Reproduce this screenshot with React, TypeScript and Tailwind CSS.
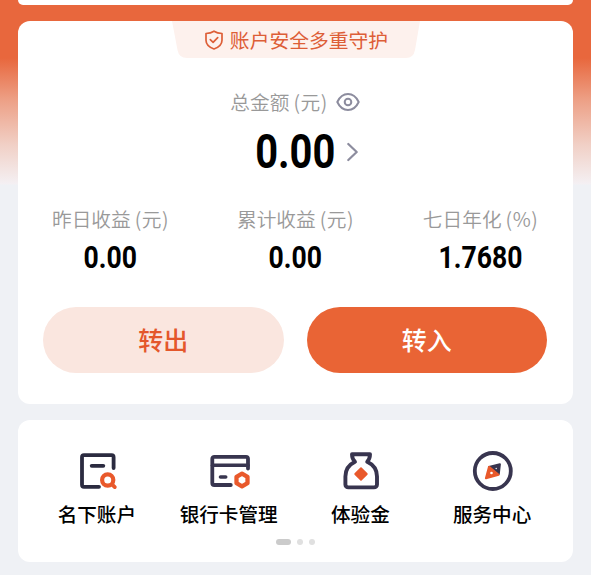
import type { ReactNode } from "react";

const stats = [
  { label: "昨日收益", unit: "元", value: "0.00" },
  { label: "累计收益", unit: "元", value: "0.00" },
  { label: "七日年化", unit: "%", value: "1.7680" },
];

function AccountIcon() {
  return (
    <svg className="size-10 overflow-visible" viewBox="0 0 40 40" fill="none" strokeLinecap="round" strokeLinejoin="round">
      <path d="M36.600 17V6.200a2 2 0 0 0-2-2H7a2 2 0 0 0-2 2v27.600a2 2 0 0 0 2 2h15" stroke="#2b2b40" strokeWidth="3.800" />
      <path d="M14.700 14.800H26.300" stroke="#2b2b40" strokeWidth="3.800" />
      <circle cx="30.700" cy="29" r="5.600" stroke="#e9592b" strokeWidth="4.200" />
      <path d="M35.500 33.800l2.300 2.300" stroke="#e9592b" strokeWidth="3.800" />
    </svg>
  );
}

function BankCardIcon() {
  return (
    <svg className="size-10 overflow-visible" viewBox="0 0 40 40" fill="none" strokeLinecap="round" strokeLinejoin="round">
      <path d="M39 17.500V7.800a2 2 0 0 0-2-2H5.300a2 2 0 0 0-2 2V32a2 2 0 0 0 2 2h16.500" stroke="#38354f" strokeWidth="3.800" />
      <path d="M3.500 14.300H39" stroke="#38354f" strokeWidth="3.400" />
      <path d="M11.500 26h5.200" stroke="#38354f" strokeWidth="3.600" />
      <path d="M33 22.700l5.500 3.150v6.300L33 35.300l-5.500-3.150v-6.300z" stroke="#e9592b" strokeWidth="4.300" />
    </svg>
  );
}

function MoneyBagIcon() {
  return (
    <svg className="size-10 overflow-visible" viewBox="0 0 40 40" fill="none" strokeLinejoin="round">
      <path
        d="M12 3.300h18c0 3-1 5.500-2.800 7.500C33 13.500 37 18.500 37 25.500v7.900a3 3 0 0 1-3 3H8.400a3 3 0 0 1-3-3v-7.900c0-7 4-12 9.600-14.700-2-2-3-4.500-3-7.500z"
        stroke="#38354f"
        strokeWidth="3.900"
      />
      <path d="M21 17.200l5.800 5.800-5.800 5.800-5.800-5.800z" fill="#e9592b" stroke="#e9592b" strokeWidth="1.800" />
    </svg>
  );
}

function CompassIcon() {
  return (
    <svg className="size-10 overflow-visible" viewBox="0 0 40 40" fill="none" strokeLinejoin="round">
      <circle cx="20.800" cy="20" r="18" stroke="#38354f" strokeWidth="3.800" />
      <path d="M17 16l10.900-2.700-1.100 9.700z" fill="#38354f" stroke="#38354f" strokeWidth="2" />
      <path d="M17 15.800l-3.100 11.500 12.700-3.500z" fill="#e9592b" stroke="#e9592b" strokeWidth="2" />
      <circle cx="19.500" cy="22" r="1.300" fill="#fff" />
      <circle cx="24.200" cy="17.500" r="0.700" fill="#fff" />
    </svg>
  );
}

const services: { label: string; icon: ReactNode }[] = [
  { label: "名下账户", icon: <AccountIcon /> },
  { label: "银行卡管理", icon: <BankCardIcon /> },
  { label: "体验金", icon: <MoneyBagIcon /> },
  { label: "服务中心", icon: <CompassIcon /> },
];

function Label({ text, unit }: { text: string; unit: string }) {
  return (
    <span className="flex text-[19.7px] leading-7 font-[350] whitespace-nowrap text-[#999999]">
      {text}
      <span className="ml-1 tracking-[0.5px]">({unit})</span>
    </span>
  );
}

function SecurityBadge() {
  return (
    <div className="relative mx-auto flex h-[37px] w-[248px] items-center justify-center">
      <svg className="absolute inset-0 h-full w-full" viewBox="0 0 248 37">
        <path d="M0 0h248l-5 29q-1.500 8-9 8H15q-8 0-9.500-8z" fill="#fdf1ed" />
      </svg>
      <div className="relative flex items-center gap-1.5 pl-px text-[#dd5e37]">
        <svg className="size-5" viewBox="0 0 20 20" fill="none" stroke="currentColor" strokeWidth="1.700" strokeLinecap="round" strokeLinejoin="round">
          <path d="M10 1.200c2.300 1.500 5 2.200 8 2.300v6.800c0 4.200-3.300 7-8 8.700-4.700-1.700-8-4.500-8-8.700V3.500c3-.1 5.700-.8 8-2.300z" />
          <path d="M6.300 9.700l2.800 2.600 4.600-4.600" />
        </svg>
        <span className="text-[19.8px] leading-7">账户安全多重守护</span>
      </div>
    </div>
  );
}

export default function App() {
  return (
    <div className="h-[575px] w-[591px] overflow-hidden bg-[#eff1f5] font-['Noto_Sans_CJK_SC',sans-serif]">
      <div className="h-[575px] bg-[linear-gradient(to_bottom,#e8673d_0px,#e8673d_58px,#eda086_100px,#f1d0c6_145px,#f4f0f3_184px,#eff1f5_185px)] px-[18px]">
        <div className="h-[5px] rounded-b-xl bg-white" />

        <section className="mt-4 h-[383px] rounded-xl bg-white">
          <SecurityBadge />

          <div className="mt-[30px] flex items-center justify-center gap-2 pr-px">
            <Label text="总金额" unit="元" />
            <svg className="h-5 w-6" viewBox="0 0 24 20" fill="none" stroke="#8c8c9e" strokeWidth="2">
              <path d="M1.300 10C3.700 4.900 7.500 2 12 2s8.300 2.900 10.700 8c-2.400 5.100-6.200 8-10.700 8S3.700 15.100 1.300 10z" strokeLinejoin="round" />
              <circle cx="12" cy="10" r="3.300" />
            </svg>
          </div>

          <div className="mt-2 flex h-14 items-center justify-center pl-6">
            <span className="w-[80px] text-center font-[Roboto,sans-serif] text-[48px] leading-[56px] font-bold text-black">
              <span className="-ml-[10px] inline-block origin-center scale-x-[0.83]">0.00</span>
            </span>
            <svg className="ml-2.5 h-5 w-3" viewBox="0 0 12 20" fill="none" stroke="#8c8c9e" strokeWidth="2.200" strokeLinecap="round" strokeLinejoin="round">
              <path d="M1.300 2l8.400 8-8.400 8" />
            </svg>
          </div>

          <div className="mt-[25px] grid grid-cols-3">
            {stats.map((stat) => (
              <div key={stat.label} className="flex flex-col items-center">
                <Label text={stat.label} unit={stat.unit} />
                <span className="mt-1.5 inline-block scale-x-[0.83] font-[Roboto,sans-serif] text-[32px] leading-9 font-bold text-black">
                  {stat.value}
                </span>
              </div>
            ))}
          </div>

          <div className="mt-8 flex justify-center gap-[23px] pr-px text-[25px] font-medium">
            <button className="h-[66px] w-[240.5px] rounded-full bg-[#fae6df] text-[#e4572b]">转出</button>
            <button className="h-[66px] w-[240.5px] rounded-full bg-[#e96435] text-white">转入</button>
          </div>
        </section>

        <section className="mt-4 h-[142px] rounded-xl bg-white pt-[31px] pr-[15px] pl-[13px]">
          <div className="grid grid-cols-4">
            {services.map((service) => (
              <div key={service.label} className="flex flex-col items-center">
                {service.icon}
                <span className="mt-[9px] text-[19.6px] leading-7 font-medium whitespace-nowrap text-black">{service.label}</span>
              </div>
            ))}
          </div>
          <div className="mt-[11px] flex items-center justify-center gap-1.5 pl-0.5">
            <span className="h-1.5 w-[15px] rounded-full bg-[#cbcbcb]" />
            <span className="size-1.5 rounded-full bg-[#e0e0e0]" />
            <span className="size-1.5 rounded-full bg-[#e0e0e0]" />
          </div>
        </section>
      </div>
    </div>
  );
}
